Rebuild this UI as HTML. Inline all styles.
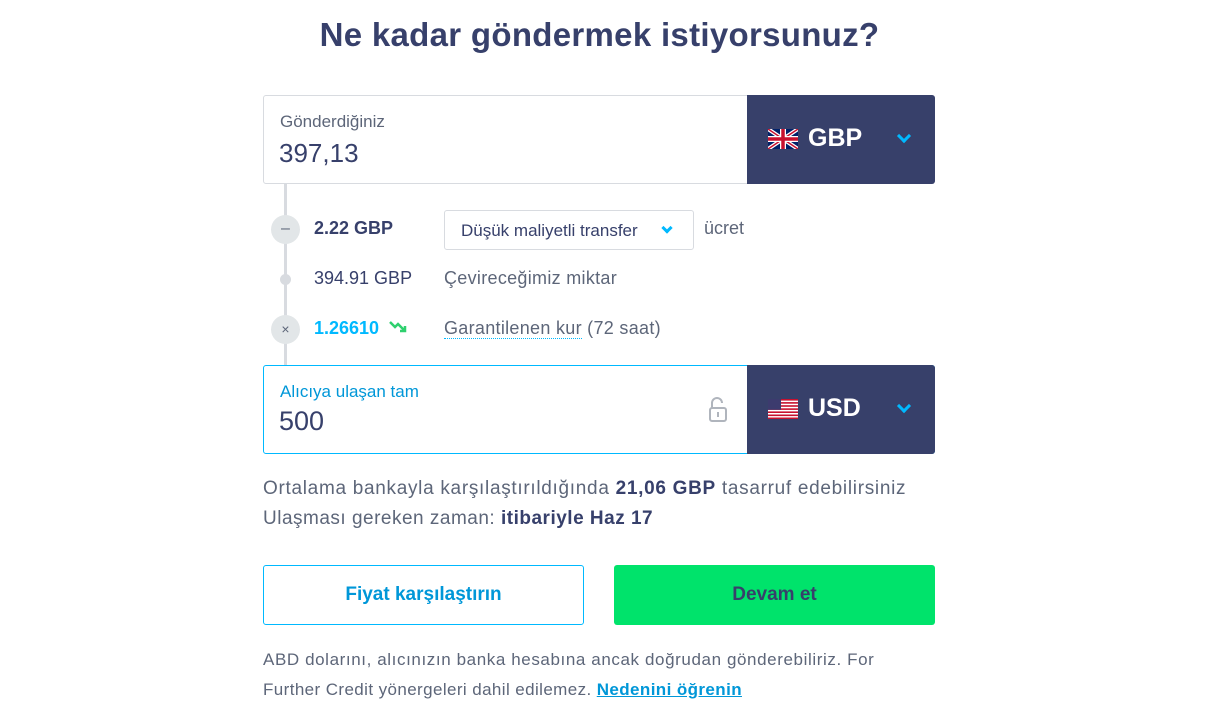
<!DOCTYPE html>
<html><head><meta charset="utf-8"><style>
*{box-sizing:border-box;margin:0;padding:0}
body{width:1229px;height:712px;background:#fff;font-family:"Liberation Sans",sans-serif;color:#37406b;position:relative;overflow:hidden}
.a{position:absolute;white-space:nowrap}
.box{position:absolute;left:263px;width:672px;height:89px;border:1px solid #d8dbe0;border-radius:3px;background:#fff}
.cur{position:absolute;left:747px;width:188px;height:89px;background:#37406a;border-radius:0 3px 3px 0;color:#fff;font-weight:bold;font-size:25px}
.chev{position:absolute;right:26px;top:36px;width:10px;height:10px;border-right:3px solid #00b9ff;border-bottom:3px solid #00b9ff;transform:rotate(45deg)}
</style></head><body>
<div class="a" style="left:0;width:1229px;text-align:center;top:16px;font-size:33px;font-weight:bold;letter-spacing:0.3px;padding-right:30px">Ne kadar göndermek istiyorsunuz?</div>

<div class="a" style="left:284px;top:184px;width:3px;height:182px;background:#d8dbe0"></div>

<div class="box" style="top:95px"></div>
<div class="a" style="left:280px;top:112px;font-size:17px;color:#5d6679">Gönderdiğiniz</div>
<div class="a" style="left:279px;top:138px;font-size:26px;color:#37406b">397,13</div>
<div class="cur" style="top:95px">
 <svg style="position:absolute;left:21px;top:34px" width="30" height="20" viewBox="0 0 60 40"><rect width="60" height="40" fill="#012169"/><path d="M0 0L60 40M60 0L0 40" stroke="#fff" stroke-width="8"/><path d="M0 0L60 40M60 0L0 40" stroke="#c8102e" stroke-width="3"/><path d="M30 0V40M0 20H60" stroke="#fff" stroke-width="12"/><path d="M30 0V40M0 20H60" stroke="#c8102e" stroke-width="7"/></svg>
 <div class="a" style="left:61px;top:29px">GBP</div><div class="chev"></div>
</div>

<div class="a" style="left:271px;top:215px;width:29px;height:29px;border-radius:50%;background:#e2e6e8;text-align:center;line-height:28px;font-size:16px;color:#5d6679">–</div>
<div class="a" style="left:314px;top:218px;font-size:18px;font-weight:bold">2.22 GBP</div>
<div class="a" style="left:444px;top:210px;width:250px;height:40px;border:1px solid #d8dbe0;border-radius:3px;font-size:17px;padding:10px 0 0 16px">Düşük maliyetli transfer<div style="position:absolute;right:22px;top:13px;width:8px;height:8px;border-right:3px solid #00b9ff;border-bottom:3px solid #00b9ff;transform:rotate(45deg)"></div></div>
<div class="a" style="left:704px;top:218px;font-size:18px;color:#5d6679">ücret</div>

<div class="a" style="left:280px;top:274px;width:11px;height:11px;border-radius:50%;background:#d8dbe0"></div>
<div class="a" style="left:314px;top:268px;font-size:18px">394.91 GBP</div>
<div class="a" style="left:444px;top:268px;font-size:18px;color:#5d6679;letter-spacing:.3px">Çevireceğimiz miktar</div>

<div class="a" style="left:271px;top:315px;width:29px;height:29px;border-radius:50%;background:#e2e6e8;text-align:center;line-height:29px;font-size:14px;color:#5d6679">×</div>
<div class="a" style="left:314px;top:318px;font-size:18px;font-weight:bold;color:#00b9ff">1.26610</div>
<svg class="a" style="left:389px;top:320px" width="20" height="14" viewBox="0 0 20 14"><path d="M1 2l5 5 3-3 7 7M11 11h5V6" fill="none" stroke="#2ed06e" stroke-width="2.5"/></svg>
<div class="a" style="left:444px;top:318px;font-size:18px;color:#5d6679;letter-spacing:.3px"><span style="border-bottom:1px dotted #00b9ff">Garantilenen kur</span> (72 saat)</div>

<div class="box" style="top:365px;border-color:#00b9ff"></div>
<div class="a" style="left:280px;top:382px;font-size:17px;color:#0097d8">Alıcıya ulaşan tam</div>
<div class="a" style="left:279px;top:406px;font-size:27px">500</div>
<svg class="a" style="left:707px;top:396px" width="22" height="28" viewBox="0 0 22 28"><path d="M5 12V7a5 5 0 0 1 10 0" fill="none" stroke="#b0b5bd" stroke-width="2"/><rect x="3" y="12" width="16" height="13" rx="2" fill="none" stroke="#b0b5bd" stroke-width="2"/><path d="M11 16v5" stroke="#b0b5bd" stroke-width="2"/></svg>
<div class="cur" style="top:365px">
 <svg style="position:absolute;left:21px;top:34px" width="30" height="20" viewBox="0 0 30 20"><rect width="30" height="20" fill="#fff"/><g fill="#c8102e"><rect y="0" width="30" height="1.6"/><rect y="3.1" width="30" height="1.6"/><rect y="6.2" width="30" height="1.6"/><rect y="9.3" width="30" height="1.6"/><rect y="12.4" width="30" height="1.6"/><rect y="15.5" width="30" height="1.6"/><rect y="18.5" width="30" height="1.5"/></g><rect width="13" height="10.8" fill="#3c3b6e"/></svg>
 <div class="a" style="left:61px;top:29px">USD</div><div class="chev"></div>
</div>

<div class="a" style="left:263px;top:478px;font-size:19px;color:#5d6679;letter-spacing:.7px">Ortalama bankayla karşılaştırıldığında <b style="color:#37406b">21,06 GBP</b> tasarruf edebilirsiniz</div>
<div class="a" style="left:263px;top:508px;font-size:19px;color:#5d6679;letter-spacing:.5px">Ulaşması gereken zaman: <b style="color:#37406b">itibariyle Haz 17</b></div>

<div class="a" style="left:263px;top:565px;width:321px;height:60px;border:1px solid #00b9ff;border-radius:3px;text-align:center;line-height:58px;font-size:19px;font-weight:bold;color:#0097d8">Fiyat karşılaştırın</div>
<div class="a" style="left:614px;top:565px;width:321px;height:60px;background:#00e36b;border-radius:3px;text-align:center;line-height:60px;font-size:19px;font-weight:bold;color:#37406b">Devam et</div>

<div class="a" style="left:263px;top:650px;font-size:17px;color:#5d6679;letter-spacing:.6px">ABD dolarını, alıcınızın banka hesabına ancak doğrudan gönderebiliriz. For</div>
<div class="a" style="left:263px;top:680px;font-size:17px;color:#5d6679;letter-spacing:.4px">Further Credit yönergeleri dahil edilemez. <b style="color:#0097d8;text-decoration:underline">Nedenini öğrenin</b></div>
</body></html>
